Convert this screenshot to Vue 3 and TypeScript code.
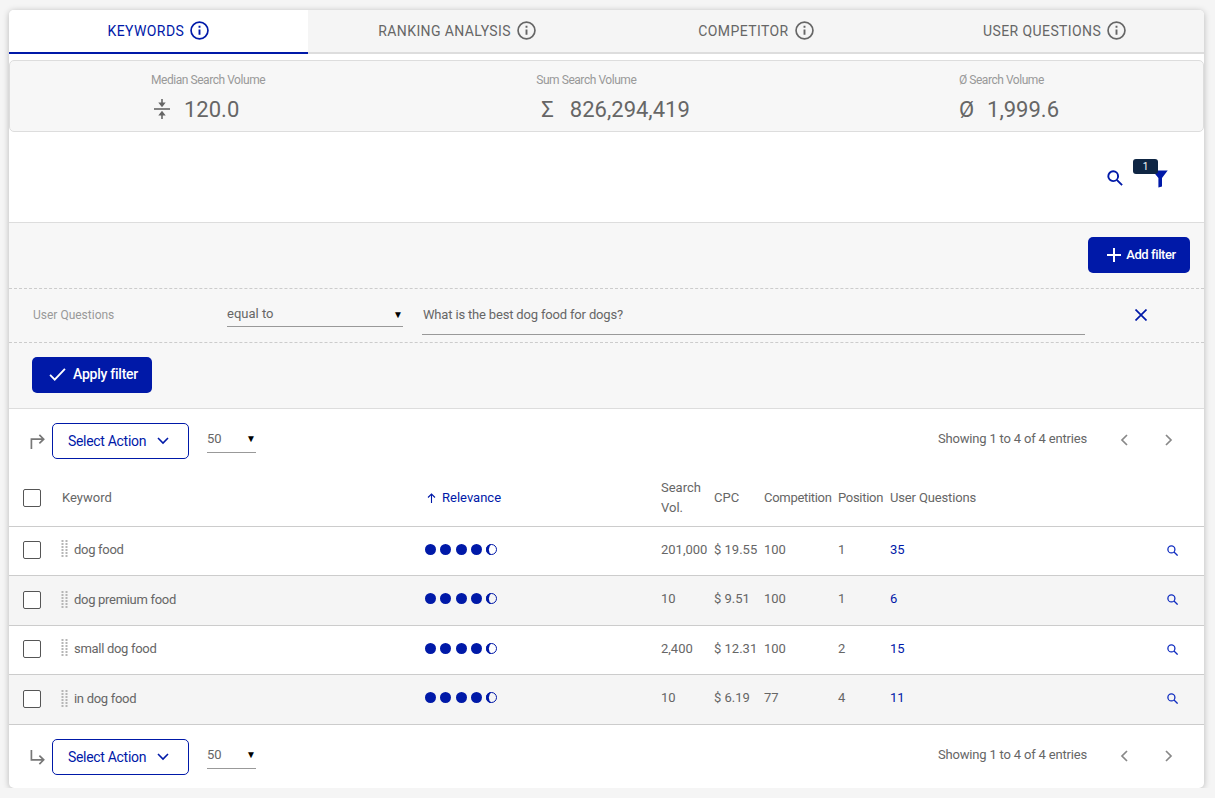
<script setup lang="ts">
interface Row { kw: string; vol: string; cpc: string; comp: string; pos: string; uq: string }
const tabs = ['Keywords', 'Ranking Analysis', 'Competitor', 'User Questions']
const rows: Row[] = [
  { kw: 'dog food', vol: '201,000', cpc: '$ 19.55', comp: '100', pos: '1', uq: '35' },
  { kw: 'dog premium food', vol: '10', cpc: '$ 9.51', comp: '100', pos: '1', uq: '6' },
  { kw: 'small dog food', vol: '2,400', cpc: '$ 12.31', comp: '100', pos: '2', uq: '15' },
  { kw: 'in dog food', vol: '10', cpc: '$ 6.19', comp: '77', pos: '4', uq: '11' },
]
</script>

<template>
  <div class="card">
    <nav class="tabs">
      <div v-for="(t, i) in tabs" :key="t" class="tab" :class="{ active: i === 0 }">
        <span>{{ t }}</span>
        <svg class="info" viewBox="0 0 18 18" width="19" height="19" fill="none" stroke="currentColor">
          <circle cx="9" cy="9" r="8" stroke-width="1.6" />
          <path d="M9 8v5" stroke-width="1.8" />
          <path d="M9 4.6v1.8" stroke-width="1.8" />
        </svg>
      </div>
    </nav>

    <section class="stats">
      <div class="stat">
        <div class="stat-label">Median Search Volume</div>
        <div class="stat-value first">
          <svg class="median" viewBox="0 0 16 20" width="16" height="20" fill="#666">
            <path d="M7.2 0h1.6v3.6h2.9L8 8.2 4.3 3.6h2.9z" />
            <rect x="0" y="9.2" width="16" height="1.6" />
            <path d="M7.2 20h1.6v-3.6h2.9L8 11.8l-3.7 4.6h2.9z" />
          </svg>
          <span>120.0</span>
        </div>
      </div>
      <div class="stat middle">
        <div class="stat-label">Sum Search Volume</div>
        <div class="stat-value second"><span class="glyph">Σ</span><span>826,294,419</span></div>
      </div>
      <div class="stat">
        <div class="stat-label">Ø Search Volume</div>
        <div class="stat-value"><span class="glyph">Ø</span><span>1,999.6</span></div>
      </div>
    </section>

    <div class="tools">
      <svg class="tool-search" viewBox="0 0 16 16" width="16" height="16" fill="none" stroke="#0019a8" stroke-width="1.9">
        <circle cx="6.2" cy="6.2" r="4.9" />
        <path d="M9.8 9.8l5.3 5.3" />
      </svg>
      <div class="funnel-wrap">
        <svg viewBox="0 0 16 18" width="16" height="18" fill="#0019a8">
          <path d="M0.3 0.5h15.4L10 8v8.6L6.4 17.4V8z" />
        </svg>
        <span class="badge">1</span>
      </div>
    </div>

    <section class="filters">
      <div class="add-row">
        <button class="btn add">
          <svg viewBox="0 0 14 14" width="14" height="14" stroke="#fff" stroke-width="2"><path d="M7 0v14M0 7h14" /></svg>
          Add filter
        </button>
      </div>
      <div class="filter-row">
        <span class="f-name">User Questions</span>
        <div class="f-select"><span>equal to</span><i class="caret">▼</i></div>
        <div class="f-input">What is the best dog food for dogs?</div>
        <svg class="f-x" viewBox="0 0 12 12" width="12" height="12" stroke="#0019a8" stroke-width="1.7"><path d="M0.5 0.5l11 11M11.5 0.5l-11 11" /></svg>
      </div>
      <div class="apply-row">
        <button class="btn apply">
          <svg viewBox="0 0 18 14" width="17" height="13" fill="none" stroke="#fff" stroke-width="2"><path d="M1 7.5l5 5L17 1" /></svg>
          Apply filter
        </button>
      </div>
    </section>

    <div class="actions top">
      <svg class="turn" viewBox="0 0 16 16" width="15" height="15" fill="none" stroke="#777" stroke-width="1.8"><path d="M1.5 16V5.5h13M10 1l4.6 4.5L10 10" /></svg>
      <button class="select-action">Select Action
        <svg viewBox="0 0 12 8" width="12" height="8" fill="none" stroke="#0019a8" stroke-width="1.6"><path d="M1 1l5 5 5-5" /></svg>
      </button>
      <div class="page-size"><span>50</span><i class="caret">▼</i></div>
      <div class="showing">Showing 1 to 4 of 4 entries</div>
      <svg class="pager prev" viewBox="0 0 8 12" width="8" height="12" fill="none" stroke="#888" stroke-width="1.7"><path d="M7 1L2 6l5 5" /></svg>
      <svg class="pager" viewBox="0 0 8 12" width="8" height="12" fill="none" stroke="#888" stroke-width="1.7"><path d="M1 1l5 5-5 5" /></svg>
    </div>

    <div class="grid head">
      <span class="check"></span>
      <span>Keyword</span>
      <span class="rel">
        <svg viewBox="0 0 9 10" width="9" height="10" fill="none" stroke="#0019a8" stroke-width="1.1"><path d="M4.5 10V1M1 4.5L4.5 1 8 4.5" /></svg>
        Relevance
      </span>
      <span class="wrap">Search Vol.</span>
      <span>CPC</span>
      <span class="tight">Competition</span>
      <span class="tight">Position</span>
      <span class="tight-sm">User Questions</span>
      <span></span>
    </div>

    <div v-for="(r, i) in rows" :key="r.kw" class="grid row" :class="{ alt: i % 2 === 1 }">
      <span class="check"></span>
      <span class="kw cell">
        <svg class="grip" viewBox="0 0 7 18" width="7" height="18" fill="#b5b5b5">
          <template v-for="y in 6" :key="y">
            <rect x="0.5" :y="(y - 1) * 3" width="2" height="2" />
            <rect x="4.5" :y="(y - 1) * 3" width="2" height="2" />
          </template>
        </svg>
        {{ r.kw }}
      </span>
      <span class="dots cell">
        <i v-for="d in 4" :key="d" class="dot"></i>
        <svg viewBox="0 0 11 11" width="11" height="11">
          <circle cx="5.5" cy="5.5" r="5" fill="none" stroke="#0019a8" stroke-width="1" />
          <path d="M5.5 0a5.5 5.5 0 0 0 0 11 7 7 0 0 1 0-11z" fill="#0019a8" />
        </svg>
      </span>
      <span class="cell">{{ r.vol }}</span>
      <span class="cell">{{ r.cpc }}</span>
      <span class="cell">{{ r.comp }}</span>
      <span class="cell">{{ r.pos }}</span>
      <span class="uq cell">{{ r.uq }}</span>
      <span class="lens">
        <svg viewBox="0 0 11 11" width="11" height="11" fill="none" stroke="#0f2cc0" stroke-width="1.3">
          <circle cx="4.4" cy="4.4" r="3.5" />
          <path d="M7 7l3.6 3.6" />
        </svg>
      </span>
    </div>

    <div class="actions bottom">
      <svg class="turn" viewBox="0 0 16 16" width="15" height="15" fill="none" stroke="#777" stroke-width="1.8"><path d="M1.5 0v10.5h13M10 6l4.6 4.5L10 15" /></svg>
      <button class="select-action">Select Action
        <svg viewBox="0 0 12 8" width="12" height="8" fill="none" stroke="#0019a8" stroke-width="1.6"><path d="M1 1l5 5 5-5" /></svg>
      </button>
      <div class="page-size"><span>50</span><i class="caret">▼</i></div>
      <div class="showing">Showing 1 to 4 of 4 entries</div>
      <svg class="pager prev" viewBox="0 0 8 12" width="8" height="12" fill="none" stroke="#888" stroke-width="1.7"><path d="M7 1L2 6l5 5" /></svg>
      <svg class="pager" viewBox="0 0 8 12" width="8" height="12" fill="none" stroke="#888" stroke-width="1.7"><path d="M1 1l5 5-5 5" /></svg>
    </div>
  </div>
</template>

<style>
html, body { background: #f5f5f5; margin: 0; }
</style>

<style scoped>
.card {
  box-sizing: border-box;
  width: 1195px;
  height: 778px;
  margin: 10px 0 0 9px;
  background: #fff;
  border-radius: 5px;
  box-shadow: 0 1px 6px rgba(0, 0, 0, 0.25);
  font-family: Roboto, "Liberation Sans", sans-serif;
  font-size: 13px;
  color: #666;
  overflow: hidden;
}
.tabs { display: grid; grid-template-columns: repeat(4, 1fr); height: 44px; background: #f5f5f5; }
.tab {
  display: flex; align-items: center; justify-content: center; gap: 6px;
  box-sizing: border-box;
  padding-bottom: 1px;
  border-bottom: 2px solid #ddd;
  font-size: 14px; text-transform: uppercase; letter-spacing: 0.4px; color: #666;
}
.tab.active { background: #fff; color: #0019a8; border-bottom-color: #0019a8; }
.info { flex: none; }

.stats {
  box-sizing: border-box;
  height: 72px;
  margin-top: 6px;
  padding: 0 144px 0 141px;
  display: flex; justify-content: space-between;
  background: #f7f7f7;
  border: 1px solid #ddd;
  border-radius: 5px;
}
.stat.middle { margin-left: 2px; }
.stat-label { margin-top: 12px; font-size: 12px; letter-spacing: -0.45px; line-height: 14px; color: #999; }
.stat-value { display: flex; align-items: center; gap: 13px; margin-top: 9px; height: 26px; font-size: 22px; color: #666; }
.stat-value.first { margin-left: 3px; gap: 14px; }
.stat-value.second { margin-left: 5px; gap: 16px; }
.glyph { font-size: 22px; }

.tools {
  box-sizing: border-box;
  height: 91px;
  border-bottom: 1px solid #ddd;
  display: flex; justify-content: flex-end; align-items: flex-start;
  padding: 38px 36px 0 0;
  gap: 29px;
}
.funnel-wrap { position: relative; width: 16px; height: 18px; }
.badge {
  position: absolute; left: -19px; top: -11px;
  width: 25px; height: 15px; border-radius: 3px;
  background: #0f2644; color: #fff;
  font-size: 10px; line-height: 15px; text-align: center;
}

.filters { background: #f7f7f7; border-bottom: 1px solid #ddd; }
.add-row { display: flex; justify-content: flex-end; padding: 14px 14px 15px 0; }
.btn {
  display: flex; align-items: center; justify-content: center;
  height: 36px; border: 0; border-radius: 5px;
  background: #0019a8; color: #fff;
  font: 500 14px Roboto, sans-serif;
}
.add { width: 102px; gap: 5px; font-size: 13px; letter-spacing: -0.4px; padding: 0 0 1px 5px; }
.apply { width: 120px; gap: 7px; letter-spacing: -0.25px; padding: 0 0 2px 3px; }
.filter-row {
  position: relative;
  display: flex; align-items: flex-start;
  box-sizing: border-box; height: 55px;
  padding: 0 0 0 24px;
  border-top: 1px dashed #ccc; border-bottom: 1px dashed #ccc;
}
.f-name { width: 194px; padding-top: 19px; font-size: 12px; line-height: 14px; color: #999; }
.f-select {
  box-sizing: border-box; width: 176px; height: 38px; padding: 17px 0 0 0;
  border-bottom: 1px solid #999;
  display: flex; justify-content: space-between; line-height: 15px;
  font-size: 13px;
}
.caret { font-style: normal; font-size: 10px; color: #000; line-height: 17px; }
.f-input {
  box-sizing: border-box; width: 663px; height: 46px; margin-left: 19px;
  padding: 18px 0 0 1px; border-bottom: 1px solid #999; font-size: 13px; letter-spacing: -0.17px; line-height: 15px;
}
.f-x { margin: 20px 0 0 50px; }
.apply-row { padding: 14px 0 15px 23px; }

.actions {
  display: flex; align-items: center;
  box-sizing: border-box; height: 36px;
}
.actions.top { margin-top: 14px; }
.actions.bottom { margin-top: 14px; }
.turn { margin-left: 21px; flex: none; }
.select-action {
  display: flex; align-items: center; justify-content: center; gap: 11px;
  box-sizing: border-box; width: 137px; height: 36px; margin-left: 7px; padding: 0 4px 0 0;
  background: #fff; border: 1px solid #0019a8; border-radius: 5px;
  color: #0019a8; font: 14px Roboto, sans-serif; letter-spacing: -0.3px;
}
.page-size {
  box-sizing: border-box; width: 49px; height: 30px; margin-left: 18px;
  display: flex; justify-content: space-between; padding: 3px 0 0 0; line-height: 26px;
  border-bottom: 1px solid #999; font-size: 13px; align-self: flex-start;
}
.page-size .caret { line-height: 26px; }
.showing { margin-left: auto; margin-right: 33px; font-size: 13px; letter-spacing: -0.18px; transform: translateY(-3px); }
.pager { flex: none; margin-right: 31px; transform: translateY(-1px); }
.pager.prev { margin-right: 37px; }

.grid {
  display: grid;
  grid-template-columns: 53px 363px 236px 53px 50px 74px 52px 1fr 40px;
  align-items: center;
  box-sizing: border-box;
  padding: 0;
}
.head { height: 58px; margin-top: 10px; border-bottom: 1px solid #ccc; }
.tight { letter-spacing: -0.3px; white-space: nowrap; }
.tight-sm { letter-spacing: -0.15px; }
.check {
  display: block; box-sizing: border-box;
  width: 18px; height: 18px; margin-left: 14px;
  border: 1px solid #555; border-radius: 2px; background: #fff;
}
.row { height: 49px; padding-bottom: 2px; border-bottom: 1px solid #ccc; }
.row.alt { height: 50px; background: #f5f5f5; }
.cell { margin-bottom: 2px; }
.rel { display: flex; align-items: center; gap: 6px; color: #0019a8; padding-left: 2px; }
.wrap { width: 44px; line-height: 20px; }
.kw { display: flex; align-items: center; gap: 6px; margin-left: -1px; letter-spacing: -0.3px; }
.alt .kw { margin-bottom: 0; }
.grip { flex: none; }
.dots { display: flex; align-items: center; gap: 4.25px; }
.dot { display: block; width: 11px; height: 11px; border-radius: 50%; background: #0019a8; }
.uq { color: #0019a8; }
.lens { display: flex; justify-content: flex-start; padding-left: 3px; }
</style>
